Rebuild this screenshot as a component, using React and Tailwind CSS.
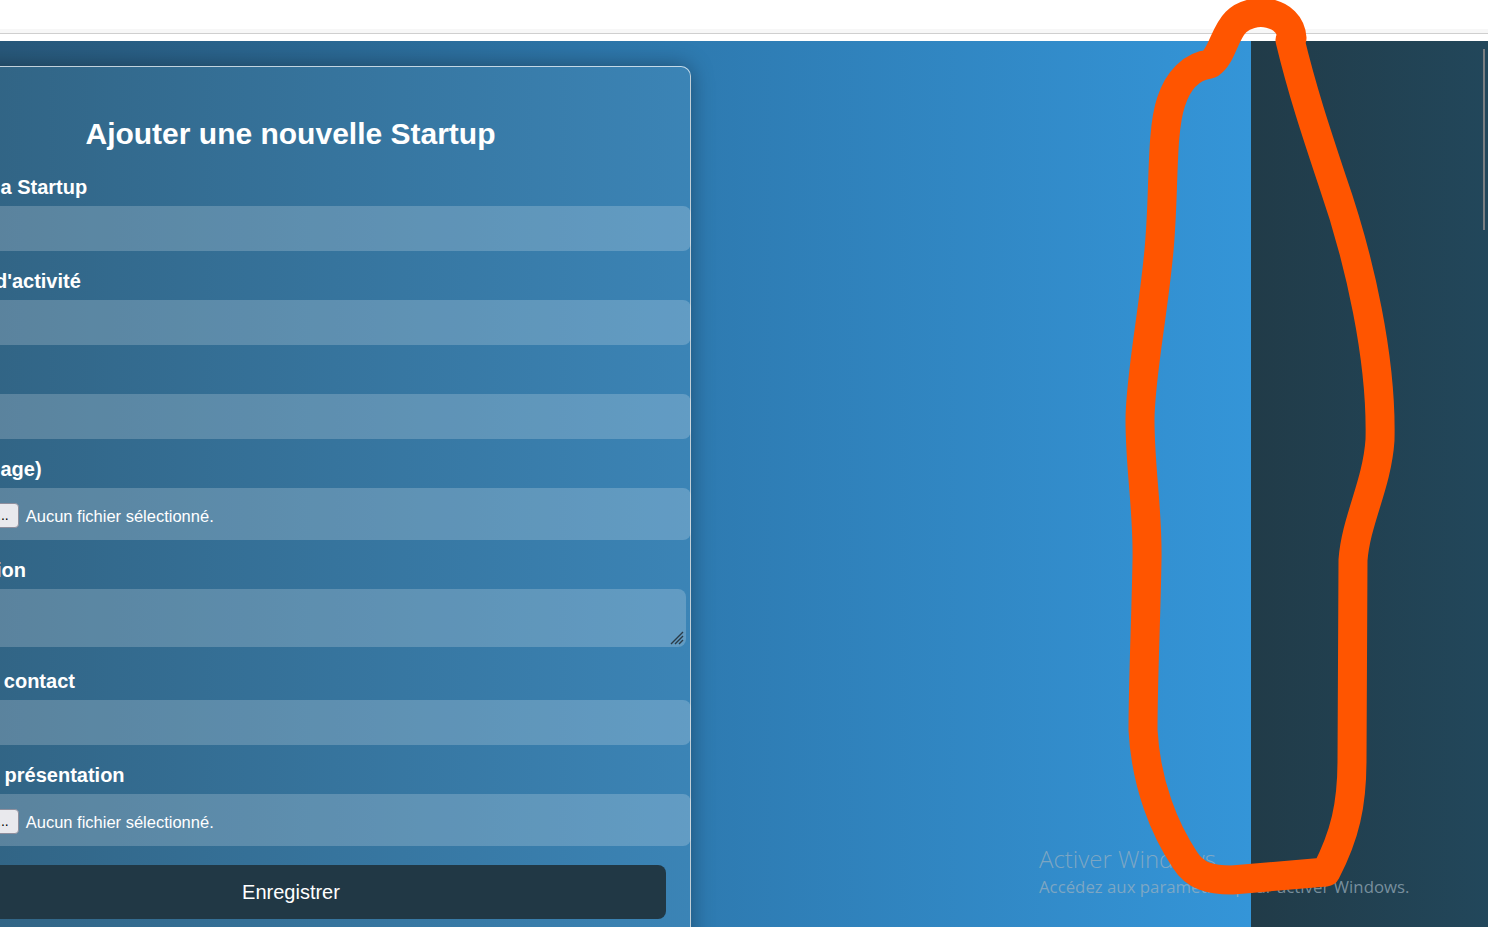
const fields = [
  { label: "Nom de la Startup", type: "text" },
  { label: "Secteur d'activité", type: "text" },
  { label: "Ville", type: "text" },
  { label: "Logo (image)", type: "file" },
  { label: "Description", type: "textarea" },
  { label: "Email de contact", type: "text" },
  { label: "Vidéo de présentation", type: "file" },
];

const FakeFile = () => (
  <div className="flex h-[52px] w-[775px] items-center rounded-lg bg-white/20">
    <span className="ml-[15px] mt-[3px] flex h-[25px] items-center rounded border border-[#8f8f9d] bg-[#e9e9ed] px-[9px] text-[14px] text-black">
      Parcourir...
    </span>
    <span className="ml-[7px] mt-[4px] text-[16.5px] text-white">Aucun fichier sélectionné.</span>
  </div>
);

const Field = ({ label, type }) => {
  return (
    <div className={type === "textarea" ? "mb-[22px]" : "mb-[18px]"}>
      <label className="mb-[7px] block text-[20px] font-bold leading-6 text-white">{label}</label>
      {type === "file" && <FakeFile />}
      {type === "textarea" && (
        <div className="relative w-[770px]">
          <textarea className="block h-[58px] w-[770px] resize-none rounded-lg bg-white/20 outline-none" />
          {/* resize grip */}
          <svg className="absolute bottom-[2px] right-[2px]" width="16" height="16" viewBox="0 0 16 16">
            <path d="M15 3 L3 15 M15 7 L7 15 M15 11 L11 15" stroke="#2a3b47" strokeWidth="1.4" />
          </svg>
        </div>
      )}
      {type === "text" && (
        <input type="text" className="block h-[45px] w-[775px] rounded-lg bg-white/20 outline-none" />
      )}
    </div>
  );
};

const App = () => {
  return (
    <div className="relative h-[927px] w-[1488px] overflow-hidden" style={{ fontFamily: '"Liberation Sans", Arial, sans-serif' }}>
      {/* browser top */}
      <div className="h-[29px] bg-white" />
      <div className="h-[4px] bg-[#f7f7f7]" />
      <div className="h-px bg-[#cfcfcf]" />
      <div className="h-[7px] bg-white" />

      <div className="flex h-[886px]">
        <div className="flex-1 overflow-hidden bg-[linear-gradient(to_right,#28587a,#2e7ab0_55%,#3495d8)]">
          <div className="ml-[-110px] mt-[25px] w-[801px] rounded-[10px] border border-white/70 bg-[linear-gradient(to_right,#30607e,#3b84b6)] px-[25px] pt-[49px] pb-10 shadow-[0_0_22px_rgba(0,0,0,0.35)]">
            <h2 className="mb-[23px] text-center text-[30px] font-bold leading-9 text-white">
              Ajouter une nouvelle Startup
            </h2>
            <form>
              {fields.map((f) => (
                <Field key={f.label} label={f.label} type={f.type} />
              ))}
              <button type="button" className="mt-px h-[54px] w-[750px] rounded-lg bg-[#213845] text-[20px] text-white">
                Enregistrer
              </button>
            </form>
          </div>
        </div>
        <div className="relative w-[237px] bg-[linear-gradient(to_right,#213b48,#22475b)]">
          <div className="absolute right-[3px] top-[8px] h-[181px] w-[2px] bg-[#7a7f83]" />
        </div>
      </div>

      {/* windows watermark */}
      <div className="pointer-events-none absolute left-[1039px] top-[843px] text-[#9fb2bf]/70" style={{ fontFamily: '"Open Sans", "Noto Sans", sans-serif' }}>
        <div className="text-[24px] font-light leading-8">Activer Windows</div>
        <div className="text-[16.8px] leading-6">Accédez aux paramètres pour activer Windows.</div>
      </div>

      {/* hand drawn annotation */}
      <svg className="pointer-events-none absolute inset-0" width="1488" height="927" viewBox="0 0 1488 927">
        <path
          d="M1292 38 C1290 10 1252 6 1236 22 C1224 34 1222 56 1210 64 C1192 66 1178 80 1171 102 C1160 135 1165 200 1158 260 C1152 320 1140 380 1140 420 C1140 470 1148 510 1147 560 C1146 620 1143 680 1143 730 C1146 785 1165 830 1185 860 C1195 876 1210 880 1232 880 L1326 872 C1345 835 1352 805 1352 760 L1353 560 C1356 520 1377 485 1380 440 C1382 360 1360 260 1332 180 C1316 132 1302 90 1290 40"
          fill="none"
          stroke="#ff5500"
          strokeWidth="29"
          strokeLinecap="round"
          strokeLinejoin="round"
        />
      </svg>
    </div>
  );
};

export default App;
